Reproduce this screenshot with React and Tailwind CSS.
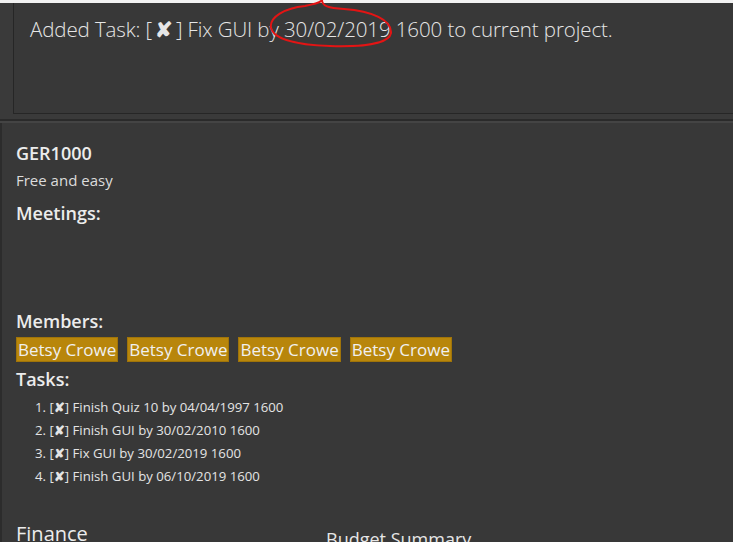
import React from 'react';

const tasks = [
  'Finish Quiz 10 by 04/04/1997 1600',
  'Finish GUI by 30/02/2010 1600',
  'Fix GUI by 30/02/2019 1600',
  'Finish GUI by 06/10/2019 1600',
];

const members = ['Betsy Crowe', 'Betsy Crowe', 'Betsy Crowe', 'Betsy Crowe'];

export default function App() {
  return (
    <div
      className="relative w-[733px] h-[542px] overflow-hidden bg-[#383838] text-[#e8e8e8]"
      style={{ fontFamily: '"Open Sans", "Noto Sans", sans-serif' }}
    >
      <div className="h-[3px] bg-[#f2f2f2]" />

      {/* result display */}
      <div className="bg-[#3a3a3a] pl-[13px] pb-[5px]">
        <div className="h-[111px] bg-[#383838] border-l border-b border-[#262626] pl-[16px] pt-[11px]">
          <p className="text-[20.5px] font-light tracking-[-0.1px] text-[#e6e6e6]">
            Added Task: [<span className="font-bold mx-[3px]">✘</span>] Fix GUI by 30/02/2019 1600 to current project.
          </p>
        </div>
      </div>
      <div className="h-[2px] bg-[#2a2a2a]" />
      <div className="h-[2px] bg-[#444444]" />

      {/* project panel */}
      <div className="h-full bg-[#383838] border-l-2 border-[#2c2c2c] pl-[14px] pt-[19px]">
        <h1 className="text-[18px] font-semibold leading-[22px] text-[#ececec]">GER1000</h1>
        <p className="text-[15px] leading-[20px] mt-[6px] text-[#dcdcdc]">Free and easy</p>
        <h2 className="text-[18px] font-semibold leading-[22px] mt-[12px] text-[#ececec]">Meetings:</h2>

        <h2 className="text-[18px] font-semibold leading-[22px] mt-[86px] text-[#ececec]">Members:</h2>
        <div className="flex gap-[9px] mt-[5px]">
          {members.map((m, i) => (
            <span
              key={i}
              className="h-[25px] px-[1px] bg-[#b8860b] text-[17px] leading-[23px] text-[#f0f0f0] border border-[#a07409]"
            >
              {m}
            </span>
          ))}
        </div>
        <h2 className="text-[18px] font-semibold leading-[22px] mt-[6px] text-[#ececec]">Tasks:</h2>
        <ol className="mt-[8px] pl-[19px] flex flex-col gap-[4px]">
          {tasks.map((t, i) => (
            <li key={i} className="text-[13.2px] font-medium leading-[19px] text-[#e4e4e4]">
              {i + 1}. [<span className="font-bold">✘</span>] {t}
            </li>
          ))}
        </ol>

        <div className="flex mt-[36px]">
          <div className="w-[310px] text-[20px] leading-[24px] text-[#ececec]">Finance</div>
          <div className="text-[18px] leading-[24px] mt-[5px] text-[#e6e6e6]">Budget Summary</div>
        </div>
      </div>

      {/* red annotation */}
      <svg className="absolute left-0 top-0 pointer-events-none" width="733" height="60" viewBox="0 0 733 60">
        <path
          d="M322 0 C322 6 328 8 344 9 C372 11 392 20 391 33 C389 44 362 47 330 46 C300 45 274 40 271 28 C269 17 285 8 305 6 C315 4 320 3 322 0"
          fill="none"
          stroke="#e31414"
          strokeWidth="2"
        />
      </svg>
    </div>
  );
}
